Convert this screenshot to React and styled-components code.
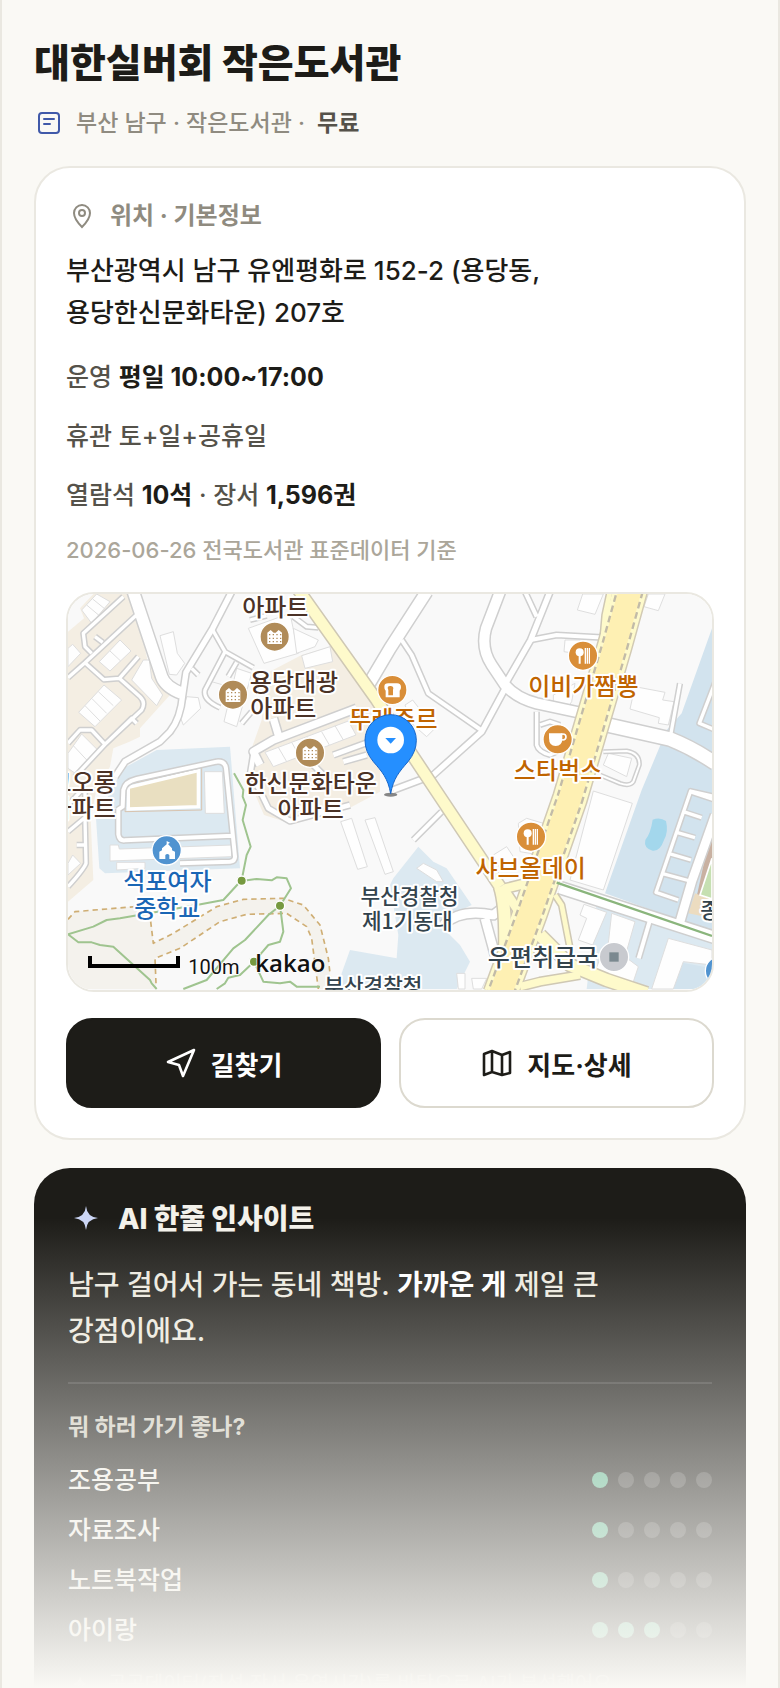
import styled, { createGlobalStyle } from "styled-components";

const GlobalStyle = createGlobalStyle`
  *, *::before, *::after {
    box-sizing: border-box;
  }

  body {
    margin: 0;
    background: #faf9f5;
    color: #1d1c18;
    font-family: Inter, "Noto Sans CJK KR", sans-serif;
    word-break: keep-all;
  }
`;

const Frame = styled.main`
  position: relative;
  height: 100vh;
  overflow: hidden;
  padding: 36px 32px 0;
  border: 2px solid #eae8e1;
  border-width: 0 2px;
`;

const Title = styled.h1`
  margin: 0;
  font-size: 39px;
  font-weight: 800;
  line-height: 54px;
`;

const Meta = styled.p`
  display: flex;
  align-items: center;
  gap: 14px;
  margin: 14px 0 24px;
  font-size: 23px;
  font-weight: 500;
  line-height: 38px;
  color: #8f8b80;

  svg {
    margin-left: 2px;
  }

  strong {
    margin-left: 6px;
    font-weight: 600;
    color: #55524a;
  }
`;

const Card = styled.section`
  padding: 30px;
  border: 2px solid #eae8e1;
  border-radius: 36px;
  background: #fff;
`;

const CardHead = styled.h2`
  display: flex;
  align-items: center;
  gap: 12px;
  margin: 0 0 16px;
  font-size: 24px;
  font-weight: 700;
  line-height: 36px;
  color: #8f8b80;

  svg {
    margin: 0 2px;
  }
`;

const Address = styled.p`
  max-width: 500px;
  margin: 0 0 25px;
  font-size: 26px;
  font-weight: 500;
  line-height: 42px;
`;

const Facts = styled.div`
  display: grid;
  gap: 23px;
`;

const Fact = styled.p`
  margin: 0;
  font-size: 25px;
  font-weight: 500;
  line-height: 36px;
  color: #55524a;

  strong {
    font-weight: 700;
    color: #1d1c18;
  }
`;

const Source = styled.p`
  margin: 20px 0 25px;
  font-size: 22px;
  font-weight: 500;
  line-height: 34px;
  color: #aba69a;
`;

const MapBox = styled.div`
  overflow: hidden;
  margin-bottom: 26px;
  border: 2px solid #eae8e1;
  border-radius: 28px;

  svg {
    display: block;
    width: 100%;
    height: auto;
  }
`;

const Actions = styled.div`
  display: grid;
  grid-template-columns: 1fr 1fr;
  gap: 18px;
`;

const Button = styled.button`
  display: flex;
  align-items: center;
  justify-content: center;
  gap: 14px;
  height: 90px;
  border: 2px solid ${(props) => (props.$primary ? "#1d1c18" : "#dcd9cf")};
  border-radius: 26px;
  background: ${(props) => (props.$primary ? "#1d1c18" : "#fff")};
  color: ${(props) => (props.$primary ? "#fff" : "#1d1c18")};
  font: inherit;
  font-size: 26px;
  font-weight: 700;
  cursor: pointer;
`;

const Insight = styled.section`
  margin-top: 28px;
  padding: 32px 34px 48px;
  border-radius: 36px;
  background: #1d1c18;
  color: #f3f1ea;
`;

const InsightHead = styled.h2`
  display: flex;
  align-items: center;
  gap: 16px;
  margin: 0 0 24px;
  font-size: 28px;
  font-weight: 800;
  line-height: 38px;

  svg {
    margin-left: 2px;
  }
`;

const InsightText = styled.p`
  max-width: 560px;
  margin: 0;
  font-size: 28px;
  font-weight: 500;
  line-height: 46px;
  color: #ece9df;

  strong {
    font-weight: 700;
    color: #fff;
  }
`;

const Divider = styled.hr`
  height: 2px;
  margin: 28px 0 26px;
  border: 0;
  background: rgba(255, 255, 255, 0.12);
`;

const ScoreTitle = styled.h3`
  margin: 0 0 11px;
  font-size: 23px;
  font-weight: 700;
  line-height: 34px;
  color: #cfccc0;
`;

const ScoreRow = styled.div`
  display: flex;
  align-items: center;
  justify-content: space-between;
  height: 50px;
  font-size: 25px;
  font-weight: 500;
  line-height: 36px;
`;

const Dots = styled.div`
  display: flex;
  gap: 10px;
`;

const Dot = styled.span`
  width: 16px;
  height: 16px;
  border-radius: 50%;
  background: ${(props) => (props.$on ? "#5eb58f" : "rgba(255, 255, 255, 0.18)")};
`;

const Note = styled.p`
  display: flex;
  align-items: center;
  gap: 18px;
  margin: 14px 0 0;
  font-size: 20px;
  line-height: 30px;
  color: #8f8b80;

  svg {
    margin-left: 2px;
  }
`;

// 아래쪽 내용을 배경색으로 덮어 흐리게 만든다
const Fade = styled.div`
  position: absolute;
  right: 0;
  bottom: 0;
  left: 0;
  height: 470px;
  background: linear-gradient(rgba(250, 249, 245, 0), #faf9f5);
  pointer-events: none;
`;

const MapLabel = styled.text`
  font-family: "Noto Sans CJK KR", sans-serif;
  font-size: ${(props) => (props.$small ? 64 : 72)}px;
  font-weight: 500;
  fill: ${(props) => props.$color};
  stroke: #fff;
  stroke-width: 12px;
  stroke-linejoin: round;
  paint-order: stroke;
`;

const MapMark = styled.text`
  font-family: ${(props) => props.$font}, sans-serif;
  font-size: ${(props) => props.$size}px;
  font-weight: ${(props) => props.$weight};
  fill: #111;
  stroke: #fff;
  stroke-width: 4px;
  paint-order: stroke;
`;

const scores = [
  { name: "조용공부", score: 1 },
  { name: "자료조사", score: 1 },
  { name: "노트북작업", score: 1 },
  { name: "아이랑", score: 3 },
];

const BEIGE = "#f4eee3";
const WATER = "#dce9f1";

const areas = [
  { fill: BEIGE, d: "M100 27H205L240 110L262 225L330 330L240 430L240 455L205 472L160 490L150 545L110 610L92 700L100 885L24 950V140L72 100L60 70Z" },
  { fill: BEIGE, d: "M605 405L620 265L725 210L830 180L960 370L960 620L870 668L690 715L612 690L560 570L575 490Z" },
  { fill: WATER, d: "M290 495L510 485L540 850L135 865L118 850L108 700L190 550Z" },
  { fill: WATER, d: "M1075 785L1120 830L1160 850L1235 960L1130 1010L1200 1080L1230 1130L1190 1212H840L845 1165L870 1095L1010 1120L1015 1050L990 900L1000 880Z" },
  { fill: "#d2e3ee", d: "M1956 130L1865 385L1820 435L1745 615L1635 925L1956 1040Z" },
  { fill: WATER, d: "M1610 950L1956 1060V1212H1580Z" },
  { fill: "#d2e3ee", d: "M1850 1130L1956 1150V1212H1830Z" },
  { fill: "#f4f2ed", d: "M24 1000L45 980L272 960L280 1075L340 1045L470 965L550 943L670 940L730 960L780 1020L805 1120L815 1212H775L755 1060L740 1025L680 985L560 988L480 1010L360 1090L285 1120L288 1212H24Z" },
  { fill: "#c9b1a2", d: "M1956 760L1940 795L1910 935L1956 950Z" },
  { fill: "#ecdcc0", d: "M1905 925L1956 945V1000L1885 985Z" },
  { fill: "#c6e0b2", stroke: "#fff", d: "M1956 820L1920 930L1956 942Z" },
];

const buildings = [
  "M65 75L110 27L150 50L95 115Z",
  "M118 230L180 165L213 198L150 258Z",
  "M56 382L132 300L185 345L105 425Z",
  "M24 505L65 447L118 500L50 568L24 550Z",
  "M24 190L38 178L62 205L24 245Z",
  "M250 225H268L275 280L308 330L290 362L215 285Z",
  "M300 152L340 140L352 205L374 235L350 270L328 268Z",
  "M380 335L415 338L422 370L370 420L362 400Z",
  "M565 130L690 85L715 205L612 235Z",
  "M700 130L775 165L765 185L710 205Z",
  "M725 212L810 185L818 230L735 250Z",
  "M530 250L575 265L530 425L492 410Z",
  "M615 502L865 408L888 450L640 545Z",
  "M24 835L38 810L62 835L24 870Z",
  "M433 560H487L493 685H436Z",
  "M150 780H175L178 792L515 780V815L150 828Z",
  "M170 832H255V850L170 855Z",
  "M842 710L875 700L922 845L893 853Z",
  "M915 705L945 698L1000 860L975 868Z",
  "M1568 27H1630L1605 88L1552 75Z",
  "M1765 27H1815L1795 77L1752 65Z",
  "M1515 165H1560L1545 205L1512 200Z",
  "M1725 305L1815 322L1808 345L1842 350L1825 420L1795 415L1798 398L1710 372Z",
  "M1480 330L1545 295L1535 350L1525 365L1480 350Z",
  "M1630 540L1645 505L1715 520L1700 575Z",
  "M1600 618L1717 655L1630 915L1530 885Z",
  "M1375 715L1400 700L1450 715L1440 810L1380 800Z",
  "M1300 810L1340 785L1370 830L1320 850Z",
  "M1035 360L1058 345L1085 380L1095 410L1130 425L1100 455L1060 420Z",
  "M1572 958L1640 982L1598 1080L1555 1065L1580 1000L1560 990Z",
  "M1655 985L1725 1010L1695 1115L1735 1145L1715 1205L1600 1175L1620 1120L1640 1120Z",
  "M1825 1060L1956 1095V1140L1870 1130L1840 1212H1775Z",
  "M1190 1165H1215V1212H1195Z",
  "M1235 1180L1280 1180L1265 1212H1240Z",
  "M1070 850L1090 835L1130 855L1150 890L1130 890Z",
];

const roads = [
  { w: 34, d: "M220 20L250 110L305 275Q315 305 365 325" },
  { w: 16, d: "M515 20L458 130L378 262L368 330Q362 400 330 440L300 470L195 530L165 575" },
  { w: 10, d: "M458 135L495 200L580 248M495 200L435 315Q428 345 480 368M530 232L505 275M575 380L545 415M395 250L415 270" },
  { w: 10, d: "M24 278L75 233L235 85M75 233L132 284L178 280L235 215M178 280L240 335Q258 352 245 375L135 478L95 435H60L24 475M135 478L215 400L230 415M135 478L45 575M190 35L70 145L75 185L95 205M105 155L128 172" },
  { w: 10, d: "M75 610V700L78 835Q70 855 24 905M24 740L72 700M50 780H75M24 660L70 610" },
  { w: 12, d: "M172 675L188 665L190 615Q195 590 230 582L470 530Q495 528 498 550L525 815Q525 828 510 830L360 835M175 672V748Q178 768 195 766L518 752" },
  { w: 22, d: "M600 540L580 500L640 465L890 370M655 450L640 400" },
  { w: 14, d: "M580 510L572 560L625 670L690 708L870 660M740 520L800 580M820 510L930 470M850 530L920 510" },
  { w: 10, d: "M700 95L740 125L775 128M570 105L620 92" },
  { w: 34, d: "M1100 20L990 190L925 300" },
  { w: 12, d: "M1025 165L1055 210L1105 325L1265 436" },
  { w: 30, d: "M1320 20L1278 130Q1262 190 1295 240L1335 300Q1370 340 1430 355L1570 385" },
  { w: 16, d: "M1338 305L1265 440L1120 570L1000 615M1340 290L1412 165L1470 20" },
  { w: 12, d: "M1395 20L1430 95M1412 165L1490 150L1640 158" },
  { w: 10, d: "M1430 380V480Q1435 500 1470 510L1500 495M1440 420L1470 410L1500 420" },
  { w: 6, d: "M1630 500L1700 498Q1740 505 1738 540L1720 590Q1710 605 1680 595L1620 570" },
  { w: 40, d: "M1620 415L1830 462Q1900 490 1966 535" },
  { w: 10, d: "M1860 295L1832 450M1966 290L1918 415L1966 435M1890 620L1966 645" },
  { w: 12, d: "M1060 765L1145 680" },
  { w: 26, d: "M1150 1020Q1200 970 1300 990L1340 960M1275 1000L1305 1110" },
  { w: 34, d: "M1500 908L1966 1058" },
  { w: 12, d: "M1770 1005L1736 1120" },
  { w: 26, d: "M1966 690L1895 890L1860 1010" },
  { w: 10, d: "M1966 635L1892 618L1788 922L1855 945M1870 680L1925 698M1850 742L1905 758M1825 805L1893 825M1808 866L1890 888" },
];

const yellowRoads = [
  { w: 32, d: "M712 10L950 345L1060 515L1130 620L1320 905" },
  { w: 36, d: "M1320 905Q1345 980 1330 1220" },
  { w: 26, d: "M1330 910L1380 985L1440 1060M1330 912L1400 895L1450 840" },
  { w: 14, d: "M1485 930L1505 960L1530 1090M1345 1080L1400 1020" },
  { w: 36, d: "M1440 1050L1530 1140L1640 1185L1760 1225" },
  { w: 22, d: "M1380 1205L1440 1190L1560 1170" },
  { w: 14, d: "M1650 20L1635 90L1628 170" },
];

const highway = "M1712 10L1665 180L1530 640L1410 985L1320 1230";

const trails = [
  "M522 565L550 615L548 635L558 660L548 705L572 785L560 810L545 885L490 945L410 960L180 1000L140 1005L100 1025L24 1048L55 1072L95 1072L120 1080L160 1085L270 1185L275 1195L290 1212",
  "M545 888L590 882L635 886L650 877L680 880L693 910L660 962L670 1040L660 1070L625 1080L582 1130L610 1190L660 1195L690 1190L710 1205L780 1205",
  "M660 962L625 990L555 1065L520 1090L440 1185L370 1212M582 1130L540 1170L505 1178L495 1195L470 1212",
];

const trailNodes = [
  [545, 887],
  [660, 962],
  [582, 1130],
];

const BROWN = "#4b3226";
const ORANGE = "#c06400";
const BLUE = "#1a66b5";
const SLATE = "#33434d";

const labels = [
  { x: 646, y: 93, text: "아파트", color: BROWN },
  { x: 702, y: 318, text: "용당대광", color: BROWN },
  { x: 670, y: 396, text: "아파트", color: BROWN },
  { x: 752, y: 622, text: "한신문화타운", color: BROWN },
  { x: 752, y: 698, text: "아파트", color: BROWN },
  { x: 68, y: 618, text: "코오롱", color: BROWN },
  { x: 68, y: 696, text: "아파트", color: BROWN },
  { x: 322, y: 916, text: "석포여자", color: BLUE },
  { x: 322, y: 995, text: "중학교", color: BLUE },
  { x: 1000, y: 428, text: "뚜레쥬르", color: ORANGE },
  { x: 1570, y: 330, text: "이비가짬뽕", color: ORANGE },
  { x: 1494, y: 582, text: "스타벅스", color: ORANGE },
  { x: 1412, y: 875, text: "샤브올데이", color: ORANGE },
  { x: 1449, y: 1144, text: "우편취급국", color: SLATE },
  { x: 1049, y: 956, text: "부산경찰청", color: SLATE, small: true },
  { x: 1042, y: 1032, text: "제1기동대", color: SLATE, small: true },
  { x: 940, y: 1228, text: "부산경찰청", color: SLATE, small: true },
  { x: 1950, y: 1000, text: "종", color: SLATE, small: true },
];

const places = [
  { x: 644, y: 155, type: "apartment" },
  { x: 519, y: 329, type: "apartment" },
  { x: 750, y: 503, type: "apartment" },
  { x: 997, y: 315, type: "bakery" },
  { x: 1569, y: 212, type: "food" },
  { x: 1493, y: 463, type: "cafe" },
  { x: 1413, y: 755, type: "food" },
  { x: 320, y: 796, type: "school" },
  { x: 1980, y: 1158, type: "school" },
  { x: 1662, y: 1116, type: "post" },
];

const placeColors = {
  apartment: "#b08b58",
  bakery: "#d98e38",
  food: "#d98e38",
  cafe: "#d98e38",
  school: "#5093d0",
  post: "#c8cacf",
};

function PlaceGlyph({ type }) {
  if (type === "apartment")
    return (
      <>
        <path fill="#fff" d="M-22 22V-12L-12-20L-3-12H3L12-20L22-12V22Z" />
        <path
          stroke="#b08b58"
          strokeWidth="4"
          strokeDasharray="4 7"
          d="M-17-6H20M-17 5H20M-17 15H20"
        />
      </>
    );
  if (type === "food")
    return (
      <g fill="#fff">
        <circle cx="-10" cy="-10" r="12" />
        <path d="M-13 0H-7V24H-13ZM5-23H9V24H5ZM11-23H15V24H11ZM17-23H21V24H17Z" />
      </g>
    );
  if (type === "cafe")
    return (
      <g>
        <path fill="#fff" d="M-26-18H14V-4Q14 20-6 20Q-26 20-26-4Z" />
        <circle cx="16" cy="-7" r="9" fill="none" stroke="#fff" strokeWidth="5" />
      </g>
    );
  if (type === "bakery")
    return (
      <g>
        <path
          fill="#fff"
          d="M-24-10Q-24-20-12-20H14Q26-20 26-8Q26 0 22 2V22H-20V2Q-24 0-24-10Z"
        />
        <path fill="#d98e38" d="M-12 16V0Q-18-12-6-12Q6-12 2 0V16Z" />
      </g>
    );
  if (type === "school")
    return (
      <g>
        <path
          fill="#fff"
          d="M-22 26V4L-14 0V-6L0-18V-28L10-23L4-19L16-6V0L25 4V26H8V14Q2 8-4 14V26Z"
        />
      </g>
    );
  return <rect x="-14" y="-14" width="28" height="28" fill="#7b8990" />;
}

function LibraryMap() {
  return (
    <svg viewBox="24 27 1932 1188" role="img" aria-label="도서관 위치 지도">
      <rect x="24" y="27" width="1932" height="1188" fill="#f9f9f9" />
      {areas.map((area) => (
        <path key={area.d} d={area.d} fill={area.fill} stroke={area.stroke} strokeWidth="5" />
      ))}
      <path d="M205 607L415 557V665L205 672Z" fill="#e9dfc1" stroke="#fff" strokeWidth="10" />
      <path d="M198 600L425 548V675L195 680Z" fill="none" stroke="#d8c4b0" strokeWidth="3" />
      <g fill="#fefefe" stroke="#dedede" strokeWidth="3">
        {buildings.map((d) => (
          <path key={d} d={d} />
        ))}
      </g>
      <path
        d="M80 60L118 92M98 42L135 72M150 198L182 228M75 362L120 408M95 340L140 385M115 320L160 362M40 482L85 530M455 290L490 300M655 487L680 530M695 472L720 515M740 455L765 498M785 440L808 480M825 422L850 465"
        stroke="#dedede"
        strokeWidth="3"
      />
      <g fill="none" strokeLinejoin="round">
        {roads.map((road) => (
          <path key={road.d} d={road.d} stroke="#cfcfcf" strokeWidth={road.w + 9} />
        ))}
        {roads.map((road) => (
          <path key={road.d} d={road.d} stroke="#fff" strokeWidth={road.w} />
        ))}
        <path d={highway} stroke="#d2cab4" strokeWidth="108" />
        {yellowRoads.map((road) => (
          <path key={road.d} d={road.d} stroke="#cfc8b4" strokeWidth={road.w + 9} />
        ))}
        <path d={highway} stroke="#fefacb" strokeWidth="99" />
        {yellowRoads.map((road) => (
          <path key={road.d} d={road.d} stroke="#fefacb" strokeWidth={road.w} />
        ))}
        <path d={highway} stroke="#c2bba8" strokeWidth="82" strokeDasharray="20 12" />
        <path d={highway} stroke="#fef0b3" strokeWidth="68" />
        <g stroke="#cfae74" strokeWidth="5" strokeDasharray="16 12">
          <path d="M24 1003L45 980L272 961M272 1010L280 1075L340 1045L470 965L550 943L670 940L730 960L780 1020L805 1120L815 1212" />
          <path d="M288 1195L285 1120L360 1090L480 1010L560 988L680 985L740 1025L755 1060L775 1212" />
        </g>
        <g stroke="#9fc48f" strokeWidth="6">
          {trails.map((d) => (
            <path key={d} d={d} />
          ))}
          <path d="M1490 893L1956 1053" stroke="#8ab57c" strokeWidth="7" />
        </g>
      </g>
      <path
        d="M1778 704Q1800 695 1818 708Q1826 740 1812 765Q1800 800 1778 797Q1750 790 1756 765Q1772 745 1778 704Z"
        fill="#a3d7ec"
      />
      {trailNodes.map(([x, y]) => (
        <circle key={x} cx={x} cy={y} r="14" fill="#76993f" stroke="#fff" strokeWidth="4" />
      ))}
      {places.map((place) => (
        <g key={`${place.x}-${place.y}`} transform={`translate(${place.x} ${place.y})`}>
          <circle r="44" fill={placeColors[place.type]} stroke="#fff" strokeWidth="4" />
          <PlaceGlyph type={place.type} />
        </g>
      ))}
      {labels.map((label) => (
        <MapLabel
          key={`${label.x}-${label.y}`}
          x={label.x}
          y={label.y}
          textAnchor="middle"
          $color={label.color}
          $small={label.small}
        >
          {label.text}
        </MapLabel>
      ))}
      <ellipse cx="992" cy="629" rx="20" ry="6" fill="#555" opacity="0.7" />
      <path
        d="M992 626C984 580 966 560 940 530Q915 500 915 466A77 77 0 0 1 1069 466Q1069 500 1044 530C1018 560 1000 580 992 626Z"
        fill="#258fff"
        stroke="#1766c9"
        strokeWidth="3"
      />
      <circle cx="992" cy="465" r="40" fill="#fff" />
      <path d="M976 459H1008L992 476Z" fill="#258fff" />
      <path d="M90 1113V1143H354V1113" fill="none" stroke="#000" strokeWidth="12" />
      <MapMark x="385" y="1167" $font="Roboto" $size={60} $weight={400}>
        100m
      </MapMark>
      <MapMark x="586" y="1160" $font='"Open Sans"' $size={72} $weight={600}>
        kakao
      </MapMark>
    </svg>
  );
}

function App() {
  return (
    <>
      <GlobalStyle />
      <Frame>
        <Title>대한실버회 작은도서관</Title>
        <Meta>
          <svg width="26" height="26" viewBox="0 0 26 26" fill="none" stroke="#4059a9" strokeWidth="2" strokeLinecap="round">
            <rect x="3" y="3" width="20" height="20" rx="3" />
            <path d="M8 9H18M8 14H14" />
          </svg>
          <span>
            부산 남구 · 작은도서관 · <strong>무료</strong>
          </span>
        </Meta>

        <Card>
          <CardHead>
            <svg width="28" height="28" viewBox="0 0 28 28" fill="none" stroke="#8f8b80" strokeWidth="2">
              <path d="M14 25C9 20 6 16 6 11A8 8 0 0 1 22 11C22 16 19 20 14 25Z" />
              <circle cx="14" cy="11" r="3" />
            </svg>
            위치 · 기본정보
          </CardHead>
          <Address>부산광역시 남구 유엔평화로 152-2 (용당동, 용당한신문화타운) 207호</Address>
          <Facts>
            <Fact>
              운영 <strong>평일 10:00~17:00</strong>
            </Fact>
            <Fact>휴관 토+일+공휴일</Fact>
            <Fact>
              열람석 <strong>10석</strong> · 장서 <strong>1,596권</strong>
            </Fact>
          </Facts>
          <Source>2026-06-26 전국도서관 표준데이터 기준</Source>
          <MapBox>
            <LibraryMap />
          </MapBox>
          <Actions>
            <Button type="button" $primary>
              <svg width="32" height="32" viewBox="0 0 32 32" fill="none" stroke="currentColor" strokeWidth="2.6" strokeLinejoin="round">
                <path d="M29 3L3 15L14 18L18 29Z" />
              </svg>
              길찾기
            </Button>
            <Button type="button">
              <svg width="32" height="32" viewBox="0 0 32 32" fill="none" stroke="currentColor" strokeWidth="2.6" strokeLinejoin="round">
                <path d="M3 7L11 4L21 8L29 5V26L21 28L11 25L3 28ZM11 4V25M21 8V28" />
              </svg>
              지도·상세
            </Button>
          </Actions>
        </Card>

        <Insight>
          <InsightHead>
            <svg width="32" height="32" viewBox="0 0 32 32" fill="#ccd6f5">
              <path d="M16 3Q17 14 28 15Q17 16 16 27Q15 16 4 15Q15 14 16 3Z" />
            </svg>
            AI 한줄 인사이트
          </InsightHead>
          <InsightText>
            남구 걸어서 가는 동네 책방. <strong>가까운 게</strong> 제일 큰 강점이에요.
          </InsightText>
          <Divider />
          <ScoreTitle>뭐 하러 가기 좋나?</ScoreTitle>
          {scores.map((item) => (
            <ScoreRow key={item.name}>
              <span>{item.name}</span>
              <Dots>
                {[1, 2, 3, 4, 5].map((n) => (
                  <Dot key={n} $on={n <= item.score} />
                ))}
              </Dots>
            </ScoreRow>
          ))}
          <Note>
            <svg width="20" height="20" viewBox="0 0 32 32" fill="#8f8b80">
              <path d="M16 4Q18 14 28 16Q18 18 16 28Q14 18 4 16Q14 14 16 4Z" />
            </svg>
            공공데이터(좌석·장서·운영시간)를 바탕으로 AI가 분석했어요
          </Note>
        </Insight>
        <Fade />
      </Frame>
    </>
  );
}

export default App;
